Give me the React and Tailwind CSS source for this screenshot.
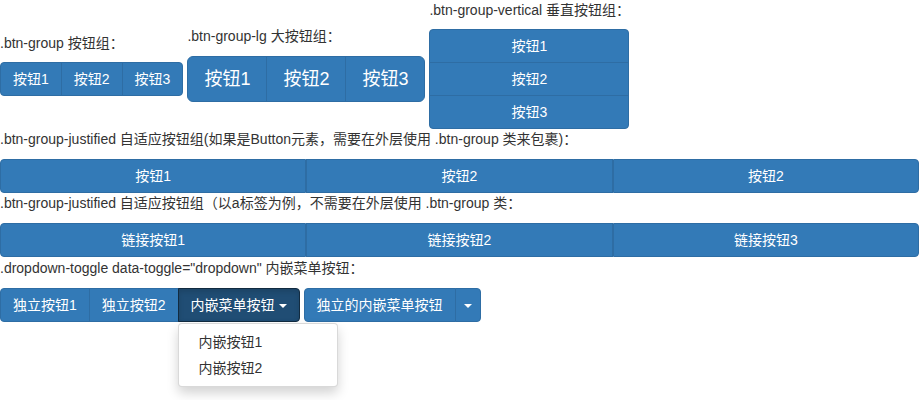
import React from 'react';

const font = { fontFamily: '"Liberation Sans", "Noto Sans CJK SC", sans-serif' };

function Caret({ ml = true }) {
  return (
    <span
      className={`${ml ? 'ml-[4px]' : ''} inline-block h-0 w-0 border-x-[4px] border-t-[4px] border-x-transparent border-t-white align-middle`}
    />
  );
}

function Btn({ children, first, last, lg, pad, className = '' }) {
  const size = lg
    ? 'px-[16px] py-[10px] text-[18px] leading-[24px]'
    : `${pad || 'px-[12px]'} py-[6px] text-[14px] leading-[20px]`;
  return (
    <button
      className={`border bg-[#337ab7] border-[#2e6da4] text-white whitespace-nowrap ${size} ${first ? (lg ? 'rounded-l-[6px]' : 'rounded-l-[4px]') : '-ml-px'} ${last ? (lg ? 'rounded-r-[6px]' : 'rounded-r-[4px]') : ''} ${className}`}
    >
      {children}
    </button>
  );
}

export default function App() {
  return (
    <div className="w-[919px] h-[400px] bg-white text-[#333] text-[14px] leading-[20px] overflow-hidden" style={font}>
      {/* top row */}
      <div className="flex items-start">
        <div className="mt-[33px] mr-[4px]">
          <div className="mb-[9px]">.btn-group 按钮组：</div>
          <div className="flex">
            <Btn first>按钮1</Btn>
            <Btn>按钮2</Btn>
            <Btn last>按钮3</Btn>
          </div>
        </div>
        <div className="mt-[26px] mr-[4px]">
          <div className="mb-[10px]">.btn-group-lg 大按钮组：</div>
          <div className="flex">
            <Btn first lg className="w-[80px]">按钮1</Btn>
            <Btn lg className="w-[80px]">按钮2</Btn>
            <Btn last lg className="w-[80px]">按钮3</Btn>
          </div>
        </div>
        <div className="w-[200px]">
          <div className="mb-[9px] whitespace-nowrap">.btn-group-vertical 垂直按钮组：</div>
          <div className="flex flex-col">
            <button className="border bg-[#337ab7] border-[#2e6da4] text-white px-[12px] py-[6px] rounded-t-[4px]">按钮1</button>
            <button className="-mt-px border bg-[#337ab7] border-[#2e6da4] text-white px-[12px] py-[6px]">按钮2</button>
            <button className="-mt-px border bg-[#337ab7] border-[#2e6da4] text-white px-[12px] py-[6px] rounded-b-[4px]">按钮3</button>
          </div>
        </div>
      </div>

      {/* justified buttons */}
      <div className="mb-[10px]">.btn-group-justified 自适应按钮组(如果是Button元素，需要在外层使用 .btn-group 类来包裹)：</div>
      <div className="flex w-full">
        <button className="flex-1 border bg-[#337ab7] border-[#2e6da4] text-white px-[12px] py-[6px] rounded-l-[4px]">按钮1</button>
        <button className="flex-1 border bg-[#337ab7] border-[#2e6da4] text-white px-[12px] py-[6px]">按钮2</button>
        <button className="flex-1 border bg-[#337ab7] border-[#2e6da4] text-white px-[12px] py-[6px] rounded-r-[4px]">按钮2</button>
      </div>
      <div className="mb-[10px]">.btn-group-justified 自适应按钮组（以a标签为例，不需要在外层使用 .btn-group 类：</div>
      <div className="flex w-full">
        <a className="flex-1 text-center border bg-[#337ab7] border-[#2e6da4] text-white px-[12px] py-[6px] rounded-l-[4px]">链接按钮1</a>
        <a className="flex-1 text-center border bg-[#337ab7] border-[#2e6da4] text-white px-[12px] py-[6px]">链接按钮2</a>
        <a className="flex-1 text-center border bg-[#337ab7] border-[#2e6da4] text-white px-[12px] py-[6px] rounded-r-[4px]">链接按钮3</a>
      </div>

      {/* dropdown */}
      <div className="mt-[1px] mb-[10px]">.dropdown-toggle data-toggle="dropdown" 内嵌菜单按钮：</div>
      <div className="flex items-start">
        <Btn first>独立按钮1</Btn>
        <Btn>独立按钮2</Btn>
        <div className="relative">
          <button className="-ml-px border bg-[#204d74] border-[#122b40] text-white px-[12px] py-[6px] rounded-r-[4px] whitespace-nowrap shadow-[inset_0_3px_5px_rgba(0,0,0,0.125)]">
            内嵌菜单按钮<Caret />
          </button>
          <div className="absolute left-[-1px] top-[35px] w-[160px] py-[5px] bg-white border border-black/15 rounded-[4px] shadow-[0_6px_12px_rgba(0,0,0,0.175)]">
            <div className="px-[20px] py-[3px] text-[#333]">内嵌按钮1</div>
            <div className="px-[20px] py-[3px] text-[#333]">内嵌按钮2</div>
          </div>
        </div>
        <div className="ml-[4px] flex">
          <Btn first>独立的内嵌菜单按钮</Btn>
          <Btn last pad="px-[8px]"><Caret ml={false} /></Btn>
        </div>
      </div>
    </div>
  );
}
